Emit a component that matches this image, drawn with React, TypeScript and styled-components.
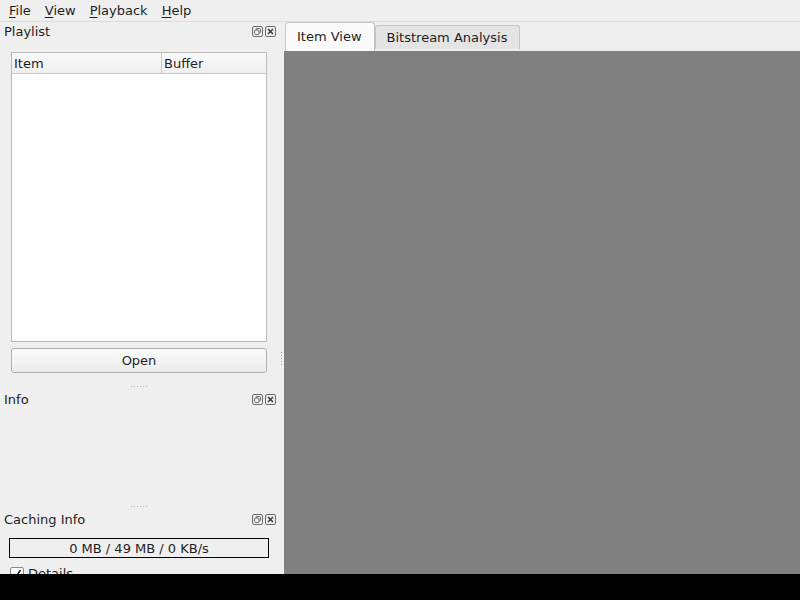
import React from "react";
import styled, { createGlobalStyle } from "styled-components";

const Global = createGlobalStyle`
  html, body { margin: 0; padding: 0; background: #000; }
  body { font-family: "DejaVu Sans", sans-serif; font-size: 13px; color: #1e1e1e; }
`;

const Window = styled.div`
  width: 800px;
  height: 574px;
  background: #efefef;
  display: flex;
  flex-direction: column;
  overflow: hidden;
`;

const MenuBar = styled.div`
  height: 21px;
  border-bottom: 1px solid #dcdcdc;
  display: flex;
  align-items: center;
  padding-left: 2px;
`;

const MenuItem = styled.span`
  padding: 0 7px;
  line-height: 21px;
  & u { text-decoration: underline; text-underline-offset: 2px; }
`;

const Body = styled.div`
  flex: 1;
  display: flex;
  min-height: 0;
`;

const Sidebar = styled.div`
  width: 280px;
  display: flex;
  flex-direction: column;
`;

const Splitter = styled.div`
  width: 4px;
  display: flex;
  justify-content: center;
  padding-top: 330px;
  box-sizing: border-box;
`;

const VDots = styled.div`
  width: 1px;
  height: 14px;
  margin-left: -1px;
  background: repeating-linear-gradient(to bottom, #a8a8a8 0 1px, transparent 1px 3px);
`;

const HDots = styled.div`
  height: 1px;
  width: 18px;
  margin: 0 auto;
  background: repeating-linear-gradient(to right, #b4b4b4 0 1px, transparent 1px 3px);
`;

const HSplit = styled.div`
  height: 8px;
  display: flex;
  align-items: center;
`;

const Dock = styled.div<{ $h?: number }>`
  display: flex;
  flex-direction: column;
  ${(p) => (p.$h ? `height: ${p.$h}px;` : "flex: 1; min-height: 0;")}
`;

const DockTitle = styled.div`
  height: 19px;
  flex: none;
  display: flex;
  align-items: center;
  padding: 0 4px;
  justify-content: space-between;
`;

const DockButtons = styled.div`
  display: flex;
  gap: 2px;
`;

const DockBtn = styled.svg`
  width: 11px;
  height: 11px;
  display: block;
`;

const DockContent = styled.div`
  padding: 0 13px 0 11px;
  display: flex;
  flex-direction: column;
`;

const Table = styled.div`
  margin-top: 11px;
  height: 290px;
  box-sizing: border-box;
  background: #fff;
  border: 1px solid #b9b9b9;
  display: flex;
  flex-direction: column;
`;

const THead = styled.div`
  height: 20px;
  display: flex;
  border-bottom: 1px solid #c8c8c8;
  background: linear-gradient(#fafafa, #efefef);
`;

const TH = styled.div<{ $w?: number }>`
  ${(p) => (p.$w ? `width: ${p.$w}px; flex: none;` : "flex: 1;")}
  padding: 1px 0 0 2px;
  box-sizing: border-box;
  line-height: 20px;
  border-right: 1px solid #c8c8c8;
  &:last-child { border-right: none; }
`;

const Button = styled.button`
  margin-top: 6px;
  height: 25px;
  border: 1px solid #b0b0b0;
  border-radius: 3px;
  background: linear-gradient(#fbfbfb, #ececec);
  font-family: inherit;
  font-size: 13px;
  color: #1e1e1e;
  padding: 0;
`;

const Progress = styled.div`
  margin: 9px 11px 0 9px;
  height: 18px;
  border: 1px solid #000;
  background: #efefef;
  text-align: center;
  line-height: 20px;
`;

const CheckRow = styled.div`
  display: flex;
  align-items: center;
  margin: 8px 0 0 10px;
  gap: 4px;
`;

const Box = styled.div`
  width: 12px;
  height: 12px;
  border: 1px solid #888;
  background: #fff;
  border-radius: 2px;
  display: flex;
  align-items: center;
  justify-content: center;
`;

const Main = styled.div`
  flex: 1;
  display: flex;
  flex-direction: column;
`;

const TabBar = styled.div`
  height: 29px;
  display: flex;
  align-items: flex-end;
  padding-left: 1px;
`;

const Tab = styled.div<{ $active?: boolean }>`
  height: ${(p) => (p.$active ? 28 : 23)}px;
  line-height: ${(p) => (p.$active ? 28 : 24)}px;
  padding: 0 12px 0 11px;
  border: 1px solid #c4c4c4;
  border-bottom: none;
  border-radius: 3px 3px 0 0;
  background: ${(p) => (p.$active ? "#fbfbfb" : "#e4e4e4")};
  margin-bottom: ${(p) => (p.$active ? 0 : 2)}px;
`;

const View = styled.div`
  flex: 1;
  background: #808080;
`;

const FloatIcon = () => (
  <DockBtn viewBox="0 0 11 11">
    <rect x="0.5" y="0.5" width="10" height="10" rx="1.5" fill="none" stroke="#6b6b6b" />
    <rect x="4" y="2.5" width="4.5" height="4.5" rx="1" fill="none" stroke="#6b6b6b" />
    <rect x="2.5" y="4" width="4.5" height="4.5" rx="1" fill="#efefef" stroke="#6b6b6b" />
  </DockBtn>
);

const CloseIcon = () => (
  <DockBtn viewBox="0 0 11 11">
    <rect x="0.5" y="0.5" width="10" height="10" rx="1.5" fill="none" stroke="#6b6b6b" />
    <path d="M3 3 L8 8 M8 3 L3 8" stroke="#3a3a3a" strokeWidth="1.6" />
  </DockBtn>
);

const TitleBar = ({ title }: { title: string }) => (
  <DockTitle>
    <span>{title}</span>
    <DockButtons>
      <FloatIcon />
      <CloseIcon />
    </DockButtons>
  </DockTitle>
);

export default function App() {
  return (
    <>
      <Global />
      <Window>
        <MenuBar>
          <MenuItem><u>F</u>ile</MenuItem>
          <MenuItem><u>V</u>iew</MenuItem>
          <MenuItem><u>P</u>layback</MenuItem>
          <MenuItem><u>H</u>elp</MenuItem>
        </MenuBar>
        <Body>
          <Sidebar>
            <Dock $h={360}>
              <TitleBar title="Playlist" />
              <DockContent>
                <Table>
                  <THead>
                    <TH $w={150}>Item</TH>
                    <TH>Buffer</TH>
                  </THead>
                </Table>
                <Button>Open</Button>
              </DockContent>
            </Dock>
            <HSplit><HDots /></HSplit>
            <Dock $h={112}>
              <TitleBar title="Info" />
            </Dock>
            <HSplit><HDots /></HSplit>
            <Dock>
              <TitleBar title="Caching Info" />
              <Progress>0 MB / 49 MB / 0 KB/s</Progress>
              <CheckRow>
                <Box>
                  <svg width="10" height="10" viewBox="0 0 10 10">
                    <path d="M1.5 5 L4 8 L8.5 1" fill="none" stroke="#222" strokeWidth="1.6" />
                  </svg>
                </Box>
                <span>Details</span>
              </CheckRow>
            </Dock>
          </Sidebar>
          <Splitter><VDots /></Splitter>
          <Main>
            <TabBar>
              <Tab $active>Item View</Tab>
              <Tab>Bitstream Analysis</Tab>
            </TabBar>
            <View />
          </Main>
        </Body>
      </Window>
    </>
  );
}
